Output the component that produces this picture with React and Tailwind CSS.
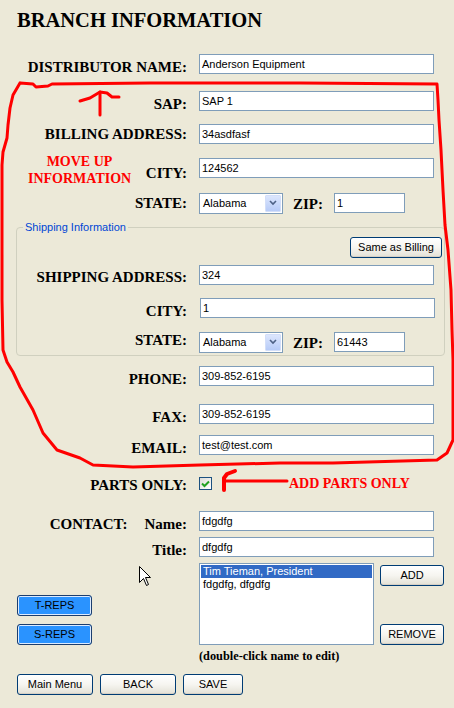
const serif = { fontFamily: '"Liberation Serif", "Times New Roman", serif' };

function TextBox({ value, className = "w-[235px]" }) {
  return (
    <div
      className={`flex h-[20px] items-center border border-[#7F9DB9] bg-white pl-[2px] text-[11px] text-black ${className}`}
    >
      {value}
    </div>
  );
}

function XpButton({ children, className = "" }) {
  return (
    <button
      className={`flex h-[21px] items-center justify-center rounded-[3px] border border-[#003C74] bg-linear-to-b from-white via-[#F6F5F0] to-[#E3E1D6] text-[11px] text-black shadow-[inset_0_-1px_0_#D6D0C5] ${className}`}
    >
      {children}
    </button>
  );
}

function BlueButton({ children }) {
  return (
    <button className="flex h-[21px] w-[75px] items-center justify-center rounded-[3px] border border-[#1C3E6E] bg-[#2A93FF] text-[11px] text-black shadow-[inset_0_0_0_1px_#DDEBFF]">
      {children}
    </button>
  );
}

function StateSelect() {
  return (
    <div className="flex h-[21px] w-[84px] items-center border border-[#7F9DB9] bg-white p-[1px]">
      <span className="flex-1 pl-[2px] text-[11px]">Alabama</span>
      <span className="flex h-full w-[16px] items-center justify-center rounded-[1px] border border-[#D2DEF9] bg-linear-to-b from-[#DCE6FD] to-[#B7CBF7]">
        <svg width="8" height="6" viewBox="0 0 8 6">
          <path d="M1 1 L4 4 L7 1" fill="none" stroke="#4D6185" strokeWidth="1.6" />
        </svg>
      </span>
    </div>
  );
}

function Row({ label, children, className = "", labelClass = "translate-y-[2.5px]", cols = "grid-cols-[187px_auto]", h = "h-[20px]" }) {
  return (
    <div className={`grid ${cols} ${h} items-center gap-x-3 ${className}`}>
      <div className={`text-right text-[15px] font-bold leading-[20px] ${labelClass}`} style={serif}>
        {label}
      </div>
      <div className="flex items-center">{children}</div>
    </div>
  );
}

function StateZip({ zip }) {
  return (
    <>
      <StateSelect />
      <span className="ml-[10px] translate-y-[1px] text-[15px] font-bold" style={serif}>
        ZIP:
      </span>
      <TextBox value={zip} className="ml-[11px] w-[71px]" />
    </>
  );
}

function Annotations() {
  return (
    <svg className="pointer-events-none absolute left-0 top-0" width="454" height="708">
      <g fill="none" stroke="#FF0000" strokeWidth="3" strokeLinejoin="round" strokeLinecap="round">
        <polyline points="20,83 33,84 36,87 48,86 52,84 150,83 300,83 437,84 438,100 439,120 441,150 443,190 445,225 448,250 451,290 452,330 453,360 453,440 447,453 437,460 333,463 280,463 200,465 133,467 93,465 80,458 57,450 43,433 33,410 20,387 13,372 7,362 3,350 2,300 2,200 2,165 3,152 7,138 8,125 10,108 13,95 20,83" />
        <path d="M100 92 L100 115" />
        <path d="M80 101 L90 98 L100 92 L107 93 L112 97 L119 97" />
        <path d="M235 471 L227 474 L224 478 L224 490" strokeWidth="4" />
        <path d="M226 481 L287 481" />
      </g>
    </svg>
  );
}

function Cursor() {
  return (
    <svg className="pointer-events-none absolute left-[139px] top-[566px]" width="13" height="21" viewBox="0 0 13 21">
      <path
        d="M0.5 0.5 L0.5 16.5 L4.5 12.5 L7.5 19.5 L9.5 18.5 L6.5 11.5 L11.5 11.5 Z"
        fill="#fff"
        stroke="#000"
        strokeWidth="1"
      />
    </svg>
  );
}

export default function App() {
  return (
    <div
      className="relative h-[708px] w-[454px] overflow-hidden bg-[#ECE9D8] text-black"
      style={{ fontFamily: '"Liberation Sans", Arial, sans-serif' }}
    >
      <h1 className="ml-[17px] pt-[8px] text-[20.5px] font-bold leading-[24px]" style={serif}>
        BRANCH INFORMATION
      </h1>

      <Row label="DISTRIBUTOR NAME:" className="mt-[22px]">
        <TextBox value="Anderson Equipment" />
      </Row>
      <Row label="SAP:" className="mt-[17px]">
        <TextBox value="SAP 1" />
      </Row>
      <Row label="BILLING ADDRESS:" className="mt-[13px]" labelClass="">
        <TextBox value="34asdfasf" />
      </Row>
      <div className="relative pt-[14px]">
        <div
          className="absolute left-[28px] top-[9px] w-[103px] text-center text-[14px] font-bold leading-[17px] text-[#FF0000]"
          style={serif}
        >
          MOVE UP INFORMATION
        </div>
        <Row label="CITY:" labelClass="translate-y-[4.5px]">
          <TextBox value="124562" />
        </Row>
      </div>
      <Row label="STATE:" className="mt-[14px]" labelClass="" h="h-[21px]">
        <StateZip zip="1" />
      </Row>

      <fieldset className="ml-[16px] mt-[8px] w-[429px] rounded-[4px] border border-[#D0D0BF] pb-[3px]">
        <legend className="ml-[6px] px-[2px] text-[11px] leading-[13px] text-[#0046D5]">
          Shipping Information
        </legend>
        <div className="mt-[3px] flex justify-end pr-[2px]">
          <XpButton className="w-[92px]">Same as Billing</XpButton>
        </div>
        <Row label="SHIPPING ADDRESS:" className="mt-[7px]" labelClass="translate-y-[1.5px]" cols="grid-cols-[170px_auto]">
          <TextBox value="324" />
        </Row>
        <Row label="CITY:" className="mt-[13px]" cols="grid-cols-[170px_auto]">
          <TextBox value="1" className="ml-[1px] w-[235px]" />
        </Row>
        <Row label="STATE:" className="mt-[13px]" labelClass="-translate-y-[2.5px]" cols="grid-cols-[170px_auto]" h="h-[21px]">
          <StateZip zip="61443" />
        </Row>
      </fieldset>

      <Row label="PHONE:" className="mt-[10px]">
        <TextBox value="309-852-6195" />
      </Row>
      <Row label="FAX:" className="mt-[18px]">
        <TextBox value="309-852-6195" />
      </Row>
      <Row label="EMAIL:" className="mt-[11px]">
        <TextBox value="test@test.com" />
      </Row>

      <Row label="PARTS ONLY:" className="mt-[18px]" labelClass="translate-y-[0.5px]">
        <span className="flex h-[13px] w-[13px] items-center justify-center border border-[#1C5180] bg-linear-to-br from-[#DCDCD7] to-white">
          <svg width="9" height="8" viewBox="0 0 9 8">
            <path d="M1 3.5 L3.5 6 L8 1.5" fill="none" stroke="#21A121" strokeWidth="2" />
          </svg>
        </span>
        <span className="ml-[77px] text-[14px] font-bold text-[#FF0000]" style={serif}>
          ADD PARTS ONLY
        </span>
      </Row>

      <div className="mt-[18px] grid h-[20px] grid-cols-[187px_auto] items-center gap-x-3">
        <div className="flex translate-y-[2.5px] justify-end text-[15px] font-bold leading-[20px]" style={serif}>
          <span className="mr-[17px]">CONTACT:</span>
          <span>Name:</span>
        </div>
        <TextBox value="fdgdfg" />
      </div>
      <Row label="Title:" className="mt-[6px]">
        <TextBox value="dfgdfg" />
      </Row>

      <div className="mt-[6px] grid grid-cols-[187px_auto] gap-x-3">
        <div className="flex flex-col gap-[8px] pl-[17px] pt-[32px]">
          <BlueButton>T-REPS</BlueButton>
          <BlueButton>S-REPS</BlueButton>
        </div>
        <div className="flex">
          <div className="h-[82px] w-[175px] border border-[#7F9DB9] bg-white p-[1px] text-[11px] leading-[13px]">
            <div className="bg-[#316AC5] pl-[2px] text-white">Tim Tieman, President</div>
            <div className="pl-[2px]">fdgdfg, dfgdfg</div>
          </div>
          <div className="ml-[6px] flex flex-col justify-between pt-[2px]">
            <XpButton className="w-[64px]">ADD</XpButton>
            <XpButton className="w-[64px]">REMOVE</XpButton>
          </div>
        </div>
      </div>

      <div className="mt-[4px] pl-[199px] text-[12.3px] font-bold leading-[14px]" style={serif}>
        (double-click name to edit)
      </div>

      <div className="ml-[17px] mt-[11px] flex gap-[7px]">
        <XpButton className="w-[76px]">Main Menu</XpButton>
        <XpButton className="w-[76px]">BACK</XpButton>
        <XpButton className="w-[60px]">SAVE</XpButton>
      </div>

      <Annotations />
      <Cursor />
    </div>
  );
}
